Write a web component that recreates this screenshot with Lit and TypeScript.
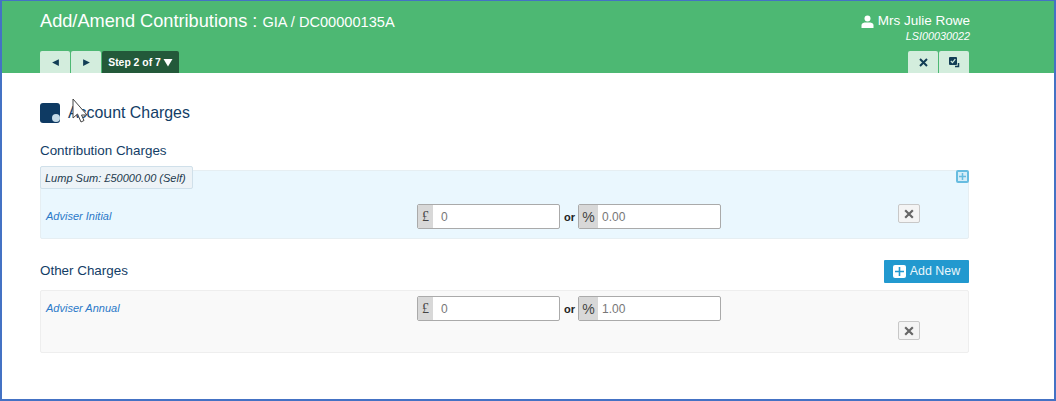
import { LitElement, html, css, svg } from "lit";
import { customElement } from "lit/decorators.js";

const cross = svg`<path d="M2 2 L9 9 M9 2 L2 9" fill="none" stroke="currentColor" stroke-width="2"/>`;

@customElement("app-root")
export class AppRoot extends LitElement {
  static styles = css`
    :host { display: block; width: 1056px; height: 401px; font-family: "Liberation Sans", Arial, sans-serif; }
    * { box-sizing: border-box; }
    .frame { position: relative; width: 1056px; height: 401px; border: 2px solid #4472c4; border-top-width: 1px; background: #fff; overflow: hidden; }
    .head { height: 72px; background: #4db873; padding: 0 85px 0 38px; display: flex; flex-direction: column; justify-content: space-between; }
    .top { display: flex; justify-content: space-between; align-items: flex-start; color: #fff; padding-top: 10px; }
    .title { font-size: 18.2px; line-height: 20px; }
    .title small { font-size: 14.6px; }
    .user { text-align: right; padding-top: 2px; margin-right: -1px; }
    .name { font-size: 13.5px; line-height: 16px; display: flex; justify-content: flex-end; align-items: center; gap: 4px; }
    .lsi { font-size: 10.8px; line-height: 14px; font-style: italic; }
    .bar { display: flex; justify-content: space-between; align-items: flex-end; }
    .tabs { display: flex; height: 22px; gap: 1px; }
    .tab { width: 30px; background: #d3eddd; border-radius: 2px 2px 0 0; display: flex; align-items: center; justify-content: center; color: #123d55; }
    .step { width: 77px; background: #23593a; color: #fff; font-size: 10.4px; font-weight: bold; border-radius: 2px 2px 0 0; display: flex; align-items: center; justify-content: center; gap: 2px; }
    .main { padding: 29px 85px 0 38px; }
    .heading { display: flex; align-items: center; gap: 8px; height: 22px; color: #123d66; font-size: 15.9px; }
    .badge { width: 20px; height: 20px; border-radius: 3px; background: #0e3a63; position: relative; }
    .badge i { position: absolute; right: 0; bottom: 1px; width: 8px; height: 8px; border-radius: 50%; background: #c5dbe8; }
    h3 { margin: 0; font-size: 13.4px; font-weight: normal; color: #123d66; line-height: 16px; }
    .sec1 { margin-top: 19px; }
    .panel { position: relative; margin-top: 11px; height: 69px; background: #eaf7fe; border: 1px solid #e6eef2; border-radius: 2px; padding: 0 5px; }
    .tag { position: absolute; left: -1px; top: -5px; height: 23px; padding: 0 6px 0 4px; display: flex; align-items: center; font-size: 11px; font-style: italic; color: #23394d; background: #edf3f7; border: 1px solid #d0e0ea; border-radius: 2px; }
    .plus { position: absolute; right: -1px; top: -1px; width: 13px; height: 13px; border: 2px solid #67bce0; border-radius: 2px; background: #d5edf8; display: flex; align-items: center; justify-content: center; }
    .row { display: grid; grid-template-columns: 371px 143px 18px 143px 1fr; align-items: center; }
    .r1 { height: 68px; padding-top: 23px; }
    .label { font-size: 11px; font-style: italic; color: #2a78c8; padding-bottom: 2px; }
    .field { display: flex; height: 25px; border: 1px solid #aaaaaa; border-radius: 2px; background: #fff; overflow: hidden; font-size: 12px; }
    .addon { width: 15px; flex: none; background: #d8d8d8; color: #444; font-family: "Liberation Serif", serif; font-size: 14px; display: flex; align-items: center; justify-content: center; }
    .pct { width: 19px; font-family: "Liberation Sans", Arial, sans-serif; }
    .val { padding-left: 8px; color: #777; display: flex; align-items: center; }
    .pv { padding-left: 4px; }
    .or { font-size: 11px; font-weight: bold; color: #222; text-align: center; padding-left: 1px; }
    .x { justify-self: end; align-self: start; margin: 10px 43px 0 0; width: 22px; height: 19px; background: #f4f4f4; border: 1px solid #c8c8c8; border-radius: 2px; color: #666; display: flex; align-items: center; justify-content: center; }
    .sec2 { margin-top: 20px; display: flex; justify-content: space-between; align-items: center; height: 24px; }
    .add { width: 85px; height: 23px; background: #2299cf; border-radius: 1px; color: #eaf6fb; font-size: 12.4px; display: flex; align-items: center; justify-content: center; gap: 4px; }
    .add b { width: 13px; height: 13px; background: #fff; border-radius: 2px; display: flex; align-items: center; justify-content: center; }
    .panel2 { margin-top: 7px; height: 63px; background: #f9f9f9; border: 1px solid #eeeeee; border-radius: 2px; padding: 5px 5px 0; }
    .panel2 .row { position: relative; }
    .x2 { position: absolute; right: 0; top: 25px; margin: 0 43px 0 0; }
    .cursor { position: absolute; left: 70px; top: 97px; }
  `;

  row(pound: string, pct: string) {
    return html`
      <div class="field"><span class="addon">£</span><span class="val">${pound}</span></div>
      <div class="or">or</div>
      <div class="field"><span class="addon pct">%</span><span class="val pv">${pct}</span></div>`;
  }

  xBtn(extra = "") {
    return html`<div class="x ${extra}"><svg width="12" height="12" viewBox="0 0 11 11">${cross}</svg></div>`;
  }

  render() {
    return html`<div class="frame">
      <header class="head">
        <div class="top">
          <div class="title">Add/Amend Contributions : <small>GIA / DC00000135A</small></div>
          <div class="user">
            <div class="name">
              <svg width="13" height="13" viewBox="0 0 13 13" fill="#fff"><circle cx="6.5" cy="3.5" r="3"/><path d="M0.5 13 V10.5 Q0.5 8.2 3.5 7.6 H9.5 Q12.5 8.2 12.5 10.5 V13 Z"/></svg>
              Mrs Julie Rowe
            </div>
            <div class="lsi">LSI00030022</div>
          </div>
        </div>
        <div class="bar">
          <div class="tabs">
            <div class="tab"><svg width="9" height="9" viewBox="0 0 8 8" fill="currentColor"><path d="M7 1 V7 L1 4 Z"/></svg></div>
            <div class="tab"><svg width="9" height="9" viewBox="0 0 8 8" fill="currentColor"><path d="M1 1 V7 L7 4 Z"/></svg></div>
            <div class="step">Step 2 of 7 <svg width="10" height="9" viewBox="0 0 10 9" fill="#fff"><path d="M0.5 1 H9.5 L5 8.5 Z"/></svg></div>
          </div>
          <div class="tabs">
            <div class="tab"><svg width="11" height="11" viewBox="0 0 11 11" color="#123d55">${cross}</svg></div>
            <div class="tab"><svg width="12" height="12" viewBox="0 0 12 12"><rect x="1" y="1" width="8" height="8" rx="1" fill="#123d55"/><path d="M2.8 5 L4.5 6.6 L7.3 3.2" fill="none" stroke="#d3eddd" stroke-width="1.2"/><path d="M10.5 7 V10.5 H7" fill="none" stroke="#123d55" stroke-width="1.5"/></svg></div>
          </div>
        </div>
      </header>
      <main class="main">
        <div class="heading"><div class="badge"><i></i></div><span>Account Charges</span></div>
        <h3 class="sec1">Contribution Charges</h3>
        <div class="panel">
          <div class="tag">Lump Sum: £50000.00 (Self)</div>
          <div class="plus"><svg width="9" height="9" viewBox="0 0 9 9"><path d="M4.5 1 V8 M1 4.5 H8" stroke="#67bce0" stroke-width="1.5"/></svg></div>
          <div class="row r1">
            <div class="label">Adviser Initial</div>
            ${this.row("0", "0.00")}
            ${this.xBtn()}
          </div>
        </div>
        <div class="sec2">
          <h3>Other Charges</h3>
          <div class="add"><b><svg width="9" height="9" viewBox="0 0 9 9"><path d="M4.5 0 V9 M0 4.5 H9" stroke="#2299cf" stroke-width="1.6"/></svg></b>Add New</div>
        </div>
        <div class="panel2">
          <div class="row">
            <div class="label">Adviser Annual</div>
            ${this.row("0", "1.00")}
            ${this.xBtn("x2")}
          </div>
        </div>
      </main>
      <svg class="cursor" width="20" height="26" viewBox="0 0 20 26"><path d="M1 1 V20 L5.5 16 L9 24 L12 22.5 L9.5 17 H15 Z" fill="#fff" stroke="#444" stroke-width="1"/></svg>
    </div>`;
  }
}
